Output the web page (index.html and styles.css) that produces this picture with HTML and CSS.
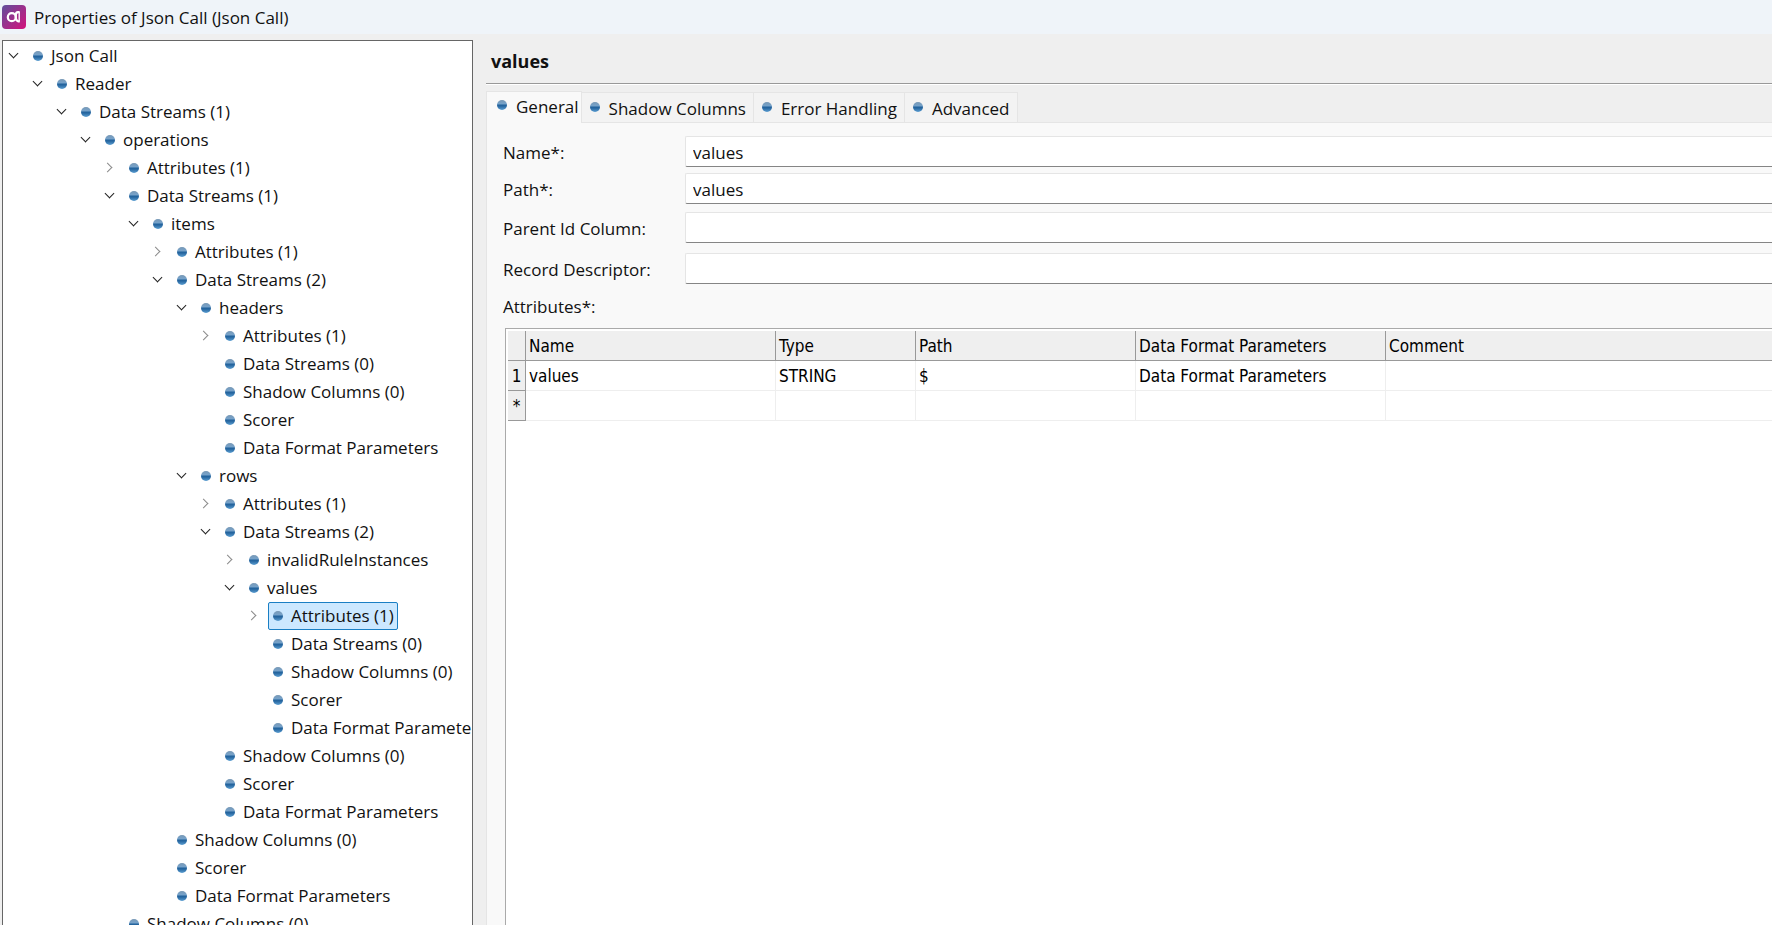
FILE: index.html
```html
<!DOCTYPE html>
<html lang="en">
<head>
  <meta charset="UTF-8" />
  <meta name="viewport" content="width=device-width, initial-scale=1.0">
  <title>Properties of Json Call (Json Call)</title>
  <link rel="stylesheet" href="styles.css">
</head>
<body>

  <header class="titlebar">
    <svg class="app-icon" viewBox="0 0 24 24" aria-hidden="true">
      <defs>
        <linearGradient id="appGradient" x1="0" y1="0" x2="1" y2="1">
          <stop offset="0" stop-color="#5f4f9c" />
          <stop offset="0.5" stop-color="#9c2f8c" />
          <stop offset="1" stop-color="#d4127c" />
        </linearGradient>
      </defs>
      <rect width="24" height="24" rx="4" fill="url(#appGradient)" />
      <circle cx="9.8" cy="12.2" r="4" fill="none" stroke="#fff" stroke-width="2.2" />
      <path d="M17.4 7.2H16Q13.8 7.4 13.8 10V12.5Q14 16.4 17.6 16.6" fill="none" stroke="#fff" stroke-width="2.2" />
      <path d="M17.2 6.4V16.8" stroke="#fff" stroke-width="1.4" />
    </svg>
    <h1>Properties of Json Call (Json Call)</h1>
  </header>

  <main class="workspace">
    <nav class="tree" aria-label="Properties">
      <ul>
        <li>
          <div class="row"><button class="toggle open" aria-label="Collapse"></button><a class="node" href="#">Json Call</a></div>
          <ul>
            <li>
              <div class="row"><button class="toggle open" aria-label="Collapse"></button><a class="node" href="#">Reader</a></div>
              <ul>
                <li>
                  <div class="row"><button class="toggle open" aria-label="Collapse"></button><a class="node" href="#">Data Streams (1)</a></div>
                  <ul>
                    <li>
                      <div class="row"><button class="toggle open" aria-label="Collapse"></button><a class="node" href="#">operations</a></div>
                      <ul>
                        <li><div class="row"><button class="toggle" aria-label="Expand"></button><a class="node" href="#">Attributes (1)</a></div></li>
                        <li>
                          <div class="row"><button class="toggle open" aria-label="Collapse"></button><a class="node" href="#">Data Streams (1)</a></div>
                          <ul>
                            <li>
                              <div class="row"><button class="toggle open" aria-label="Collapse"></button><a class="node" href="#">items</a></div>
                              <ul>
                                <li><div class="row"><button class="toggle" aria-label="Expand"></button><a class="node" href="#">Attributes (1)</a></div></li>
                                <li>
                                  <div class="row"><button class="toggle open" aria-label="Collapse"></button><a class="node" href="#">Data Streams (2)</a></div>
                                  <ul>
                                    <li>
                                      <div class="row"><button class="toggle open" aria-label="Collapse"></button><a class="node" href="#">headers</a></div>
                                      <ul>
                                        <li><div class="row"><button class="toggle" aria-label="Expand"></button><a class="node" href="#">Attributes (1)</a></div></li>
                                        <li><div class="row leaf"><a class="node" href="#">Data Streams (0)</a></div></li>
                                        <li><div class="row leaf"><a class="node" href="#">Shadow Columns (0)</a></div></li>
                                        <li><div class="row leaf"><a class="node" href="#">Scorer</a></div></li>
                                        <li><div class="row leaf"><a class="node" href="#">Data Format Parameters</a></div></li>
                                      </ul>
                                    </li>
                                    <li>
                                      <div class="row"><button class="toggle open" aria-label="Collapse"></button><a class="node" href="#">rows</a></div>
                                      <ul>
                                        <li><div class="row"><button class="toggle" aria-label="Expand"></button><a class="node" href="#">Attributes (1)</a></div></li>
                                        <li>
                                          <div class="row"><button class="toggle open" aria-label="Collapse"></button><a class="node" href="#">Data Streams (2)</a></div>
                                          <ul>
                                            <li><div class="row"><button class="toggle" aria-label="Expand"></button><a class="node" href="#">invalidRuleInstances</a></div></li>
                                            <li>
                                              <div class="row"><button class="toggle open" aria-label="Collapse"></button><a class="node" href="#">values</a></div>
                                              <ul>
                                                <li><div class="row"><button class="toggle" aria-label="Expand"></button><a class="node selected" href="#">Attributes (1)</a></div></li>
                                                <li><div class="row leaf"><a class="node" href="#">Data Streams (0)</a></div></li>
                                                <li><div class="row leaf"><a class="node" href="#">Shadow Columns (0)</a></div></li>
                                                <li><div class="row leaf"><a class="node" href="#">Scorer</a></div></li>
                                                <li><div class="row leaf"><a class="node" href="#">Data Format Parameters</a></div></li>
                                              </ul>
                                            </li>
                                          </ul>
                                        </li>
                                        <li><div class="row leaf"><a class="node" href="#">Shadow Columns (0)</a></div></li>
                                        <li><div class="row leaf"><a class="node" href="#">Scorer</a></div></li>
                                        <li><div class="row leaf"><a class="node" href="#">Data Format Parameters</a></div></li>
                                      </ul>
                                    </li>
                                  </ul>
                                </li>
                                <li><div class="row leaf"><a class="node" href="#">Shadow Columns (0)</a></div></li>
                                <li><div class="row leaf"><a class="node" href="#">Scorer</a></div></li>
                                <li><div class="row leaf"><a class="node" href="#">Data Format Parameters</a></div></li>
                              </ul>
                            </li>
                          </ul>
                        </li>
                        <li><div class="row leaf"><a class="node" href="#">Shadow Columns (0)</a></div></li>
                      </ul>
                    </li>
                  </ul>
                </li>
              </ul>
            </li>
          </ul>
        </li>
      </ul>
    </nav>

    <section class="details">
      <h2>values</h2>

      <div class="tabs" role="tablist">
        <button class="tab active" role="tab" aria-selected="true">General</button>
        <button class="tab" role="tab">Shadow Columns</button>
        <button class="tab" role="tab">Error Handling</button>
        <button class="tab" role="tab">Advanced</button>
      </div>

      <div class="panel">
        <form class="fields">
          <label for="name">Name*:</label>
          <input type="text" id="name" value="values">
          <label for="path">Path*:</label>
          <input type="text" id="path" value="values">
          <label for="parentId">Parent Id Column:</label>
          <input type="text" id="parentId">
          <label for="descriptor">Record Descriptor:</label>
          <input type="text" id="descriptor">
        </form>

        <p class="table-label" id="attributesLabel">Attributes*:</p>
        <div class="table-box">
          <table aria-labelledby="attributesLabel">
            <colgroup>
              <col class="col-index">
              <col class="col-wide">
              <col class="col-type">
              <col class="col-path">
              <col class="col-wide">
              <col>
            </colgroup>
            <thead>
              <tr>
                <th></th>
                <th>Name</th>
                <th>Type</th>
                <th>Path</th>
                <th>Data Format Parameters</th>
                <th>Comment</th>
              </tr>
            </thead>
            <tbody>
              <tr>
                <th>1</th>
                <td>values</td>
                <td>STRING</td>
                <td>$</td>
                <td>Data Format Parameters</td>
                <td></td>
              </tr>
              <tr>
                <th>*</th>
                <td></td>
                <td></td>
                <td></td>
                <td></td>
                <td></td>
              </tr>
            </tbody>
          </table>
        </div>
      </div>
    </section>
  </main>

</body>
</html>
```

FILE: styles.css
```css
:root {
  --window-bg: #efefef;
  --title-bg: #eff4f9;
  --panel-bg: #f9f9f9;
  --line: #e5e5e5;
  --dark-line: #999999;
  --ui-font: "Open Sans", "Noto Sans", sans-serif;
  --table-font: "DejaVu Sans Condensed", "DejaVu Sans", sans-serif;
}

* {
  box-sizing: border-box;
  margin: 0;
  padding: 0;
}

body {
  display: flex;
  flex-direction: column;
  height: 100vh;
  overflow: hidden;
  background-color: var(--window-bg);
  color: #111111;
  font-family: var(--ui-font);
  font-size: 17px;
  line-height: 26px;
}

button,
input {
  font: inherit;
  color: inherit;
}

/* Title bar */
.titlebar {
  display: flex;
  align-items: center;
  gap: 8px;
  flex: none;
  height: 34px;
  padding: 0 2px;
  background-color: var(--title-bg);
}

.titlebar h1 {
  padding-top: 1px;
  font-size: 17px;
  font-weight: 400;
}

.app-icon {
  width: 24px;
  height: 24px;
}

.workspace {
  display: flex;
  flex: 1;
  gap: 13px;
  min-height: 0;
}

/* Tree */
.tree {
  flex: none;
  width: 471px;
  margin: 6px 0 0 2px;
  padding-top: 1px;
  border: 1px solid #666666;
  border-bottom: none;
  background-color: #ffffff;
  overflow: hidden;
}

.tree ul {
  list-style: none;
}

.tree ul ul {
  padding-left: 24px;
}

.row {
  display: flex;
  height: 28px;
}

.row.leaf {
  padding-left: 25px;
}

.toggle {
  display: flex;
  align-items: center;
  justify-content: center;
  flex: none;
  width: 21px;
  margin-right: 4px;
  border: none;
  background: none;
}

.toggle::before {
  content: "";
  box-sizing: border-box;
  width: 7px;
  height: 7px;
  margin: 0 4px 1px 0;
  border: solid #8a8a8a;
  border-width: 1px 1px 0 0;
  transform: rotate(45deg);
}

.toggle.open::before {
  margin: 0 0 6px;
  border-color: #222222;
  transform: rotate(135deg);
}

.node {
  display: flex;
  align-items: center;
  gap: 8px;
  padding: 0 3px 0 4px;
  border: 1px solid transparent;
  color: inherit;
  text-decoration: none;
  white-space: nowrap;
}

.node.selected {
  border-color: #1a7fc4;
  border-radius: 2px;
  background-color: #cce8ff;
}

/* Blue bullet */
.node::before,
.tab::before {
  content: "";
  box-sizing: border-box;
  flex: none;
  width: 10px;
  height: 10px;
  margin-bottom: 1px;
  border-radius: 50%;
  background: linear-gradient(#7898b5 0, #76a3cb 40%, #20609a 50%, #2d6da6 65%, #5d9fd2 100%);
}

/* Details */
.details {
  display: flex;
  flex-direction: column;
  flex: 1;
  min-width: 0;
}

.details h2 {
  height: 50px;
  padding: 14px 5px 0;
  border-bottom: 1px solid var(--dark-line);
  box-shadow: 0 1px #ffffff;
  font-size: 18px;
  font-weight: 700;
}

.tabs {
  display: flex;
  align-items: flex-end;
  height: 39px;
  border-bottom: 1px solid var(--line);
}

.tab {
  display: flex;
  align-items: center;
  gap: 9px;
  height: 30px;
  padding: 2px 7px 0 8px;
  border: 1px solid var(--line);
  border-width: 1px 1px 0 0;
  background-color: #f3f3f3;
  white-space: nowrap;
}

.tab::before {
  margin-bottom: 4px;
}

.tab.active {
  height: 32px;
  margin-bottom: -1px;
  padding: 0 2px 2px 10px;
  border-left-width: 1px;
  background-color: var(--panel-bg);
}

.panel {
  display: flex;
  flex-direction: column;
  flex: 1;
  padding: 13px 0 0 16px;
  border-left: 1px solid var(--line);
  background-color: var(--panel-bg);
}

.fields {
  display: grid;
  grid-template-columns: 182px 1fr;
  grid-template-rows: 37px 39px 41px 31px;
  align-items: start;
}

.fields label {
  line-height: 33px;
}

.fields input {
  width: 100%;
  height: 31px;
  padding: 1px 7px 0;
  border: 1px solid var(--line);
  border-right: none;
  border-bottom-color: #858585;
  border-radius: 2px 0 0 2px;
  background-color: #ffffff;
  outline: none;
}

.table-label {
  margin-top: 10px;
}

/* Attributes table */
.table-box {
  flex: 1;
  margin: 8px 0 0 2px;
  padding: 2px 0 0 2px;
  border: 1px solid #aaaaaa;
  border-width: 1px 0 0 1px;
  background-color: #ffffff;
}

table {
  width: 100%;
  table-layout: fixed;
  border-collapse: separate;
  border-spacing: 0;
  color: #000000;
  font-family: var(--table-font);
  font-size: 17px;
  line-height: 20px;
}

.col-index {
  width: 18px;
}

.col-wide {
  width: 250px;
}

.col-type {
  width: 140px;
}

.col-path {
  width: 220px;
}

th,
td {
  height: 30px;
  padding: 1px 3px 0;
  border: 1px solid #eeeeee;
  border-width: 0 1px 1px 0;
  font-weight: 400;
  text-align: left;
  white-space: nowrap;
}

th {
  border-color: var(--dark-line);
  background-color: var(--window-bg);
}

tbody th {
  text-align: center;
}

th:last-child,
td:last-child {
  border-right: none;
}
```
